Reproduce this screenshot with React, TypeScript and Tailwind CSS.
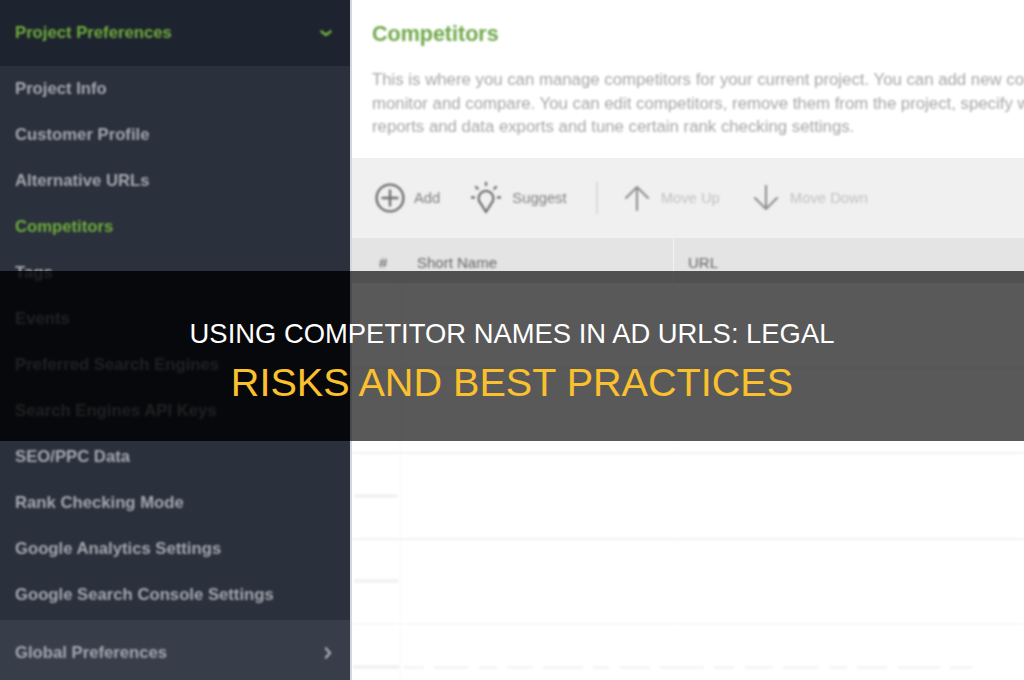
const navItems = [
  'Project Info',
  'Customer Profile',
  'Alternative URLs',
  'Competitors',
  'Tags',
  'Events',
  'Preferred Search Engines',
  'Search Engines API Keys',
  'SEO/PPC Data',
  'Rank Checking Mode',
  'Google Analytics Settings',
  'Google Search Console Settings',
]

// row text in the picture is washed out, only faint smudges are left
const rows = [
  { name: 'w-0', line: 'border-[#f4f4f4]' },
  { name: 'w-0', line: 'border-[#f2f2f2]' },
  { name: 'w-[42px]', line: 'border-[#f2f2f2]' },
  { name: 'w-[44px]', line: 'border-[#f9f9f9]' },
  { name: 'w-[46px]', line: 'border-white' },
]

const dashes = [20, 34, 18, 26, 40, 16, 30, 44, 20, 28, 36, 18, 30, 42, 22]

function ChevronIcon({ dir, color }: { dir: 'down' | 'right'; color: string }) {
  return (
    <svg width="14" height="14" viewBox="0 0 14 14" fill="none" stroke={color} strokeWidth="2.6" strokeLinecap="round" strokeLinejoin="round" className="blur-[0.8px]">
      <path d={dir === 'down' ? 'M2.5 5.5L7 9L11.5 5.5' : 'M5 2.5L9 7L5 11.5'} />
    </svg>
  )
}

function AddIcon() {
  return (
    <svg width="30" height="30" viewBox="0 0 30 30" fill="none" stroke="#6f6f6f" strokeWidth="2.4" strokeLinecap="round">
      <circle cx="15" cy="15" r="13.4" />
      <path d="M15 7.5V22.5M7.5 15H22.5" />
    </svg>
  )
}

function BulbIcon() {
  return (
    <svg width="34" height="34" viewBox="0 0 34 34" fill="none" stroke="#6f6f6f" strokeWidth="2.3" strokeLinecap="round" strokeLinejoin="round">
      <path d="M17 31L12 22.8A7.4 7.4 0 1 1 22 22.8Z" />
      <path d="M17 2V4M7 6L8.6 7.6M27 6L25.4 7.6M3 16.5H5M29 16.5H31" />
    </svg>
  )
}

function ArrowIcon({ dir }: { dir: 'up' | 'down' }) {
  return (
    <svg width="26" height="26" viewBox="0 0 26 26" fill="none" stroke="#8f8f8f" strokeWidth="2.1" strokeLinecap="round" strokeLinejoin="round">
      <path d={dir === 'up' ? 'M13 2V25M2 13L13 2L24 13' : 'M13 1V24M2 13L13 24L24 13'} />
    </svg>
  )
}

function Sidebar() {
  return (
    <aside className="flex h-[680px] w-[350px] shrink-0 flex-col bg-[#2a303c] text-[16.7px] font-bold">
      <div className="flex h-[66px] shrink-0 items-center justify-between bg-[#1e2330] pl-[15px] pr-[17px] text-[#6fae3c]">
        <span className="blur-[0.8px]">Project Preferences</span>
        <ChevronIcon dir="down" color="#6fae3c" />
      </div>
      <ul className="flex-1 blur-[0.8px]">
        {navItems.map((item) => (
          <li
            key={item}
            className={`flex h-[46px] items-center pl-[15px] ${item === 'Competitors' ? 'text-[#6fae3c]' : 'text-[#a4a8b0]'}`}
          >
            {item}
          </li>
        ))}
      </ul>
      <div className="flex h-[60px] shrink-0 items-center justify-between bg-[#383d4a] pl-[15px] pr-[15px] pt-[5px] text-[#a4a8b0]">
        <span className="blur-[0.8px]">Global Preferences</span>
        <ChevronIcon dir="right" color="#a4a8b0" />
      </div>
    </aside>
  )
}

function Toolbar() {
  return (
    <div className="h-[80px] shrink-0 bg-[#f0f0f0] pl-[23px] text-[14.8px]">
      <div className="flex h-full items-center blur-[0.8px]">
        <AddIcon />
        <span className="ml-[9px] text-[#808080]">Add</span>
        <span className="ml-[29px] flex items-center">
          <BulbIcon />
        </span>
        <span className="ml-[9px] text-[#808080]">Suggest</span>
        <span className="ml-[29px] h-[32px] w-[2px] bg-[#dcdcdc]" />
        <span className="ml-[26px]"><ArrowIcon dir="up" /></span>
        <span className="ml-[11px] text-[#c2c2c2]">Move Up</span>
        <span className="ml-[33px]"><ArrowIcon dir="down" /></span>
        <span className="ml-[11px] text-[#c2c2c2]">Move Down</span>
      </div>
    </div>
  )
}

function Main() {
  return (
    <main className="flex h-[680px] min-w-0 flex-1 flex-col overflow-hidden border-l-2 border-[#d3d6dd] bg-white">
      <div className="h-[158px] shrink-0 pl-[20px] pt-[20px] blur-[0.8px]">
        <h1 className="text-[21.5px] leading-[28px] font-bold text-[#6fa84a]">Competitors</h1>
        <p className="mt-[20px] text-[16.8px] leading-[23.5px] text-[#a6a6a6]">
          <span className="block whitespace-nowrap">This is where you can manage competitors for your current project. You can add new competitors to</span>
          <span className="block whitespace-nowrap">monitor and compare. You can edit competitors, remove them from the project, specify which to show in</span>
          <span className="block whitespace-nowrap">reports and data exports and tune certain rank checking settings.</span>
        </p>
      </div>
      <Toolbar />
      <div className="grid h-[45px] shrink-0 grid-cols-[322px_1fr] bg-[#e4e4e4] text-[15px] text-[#666666]">
        <div className="flex items-start border-r border-[#f4f4f4] pl-[27px] pt-[14px]">
          <span className="w-[38px] blur-[0.8px]">#</span>
          <span className="blur-[0.8px]">Short Name</span>
        </div>
        <div className="pl-[14px] pt-[14px]">
          <span className="blur-[0.8px]">URL</span>
        </div>
      </div>
      {rows.map((row, i) => (
        <div key={i} className={`relative grid h-[85.5px] shrink-0 grid-cols-[49px_274px_1fr] border-b-2 blur-[0.8px] ${row.line}`}>
          <div className="flex items-center justify-center border-r border-[#f7f7f7]">
            <div className={`h-[4px] bg-[#f2f2f2] ${row.name}`} />
          </div>
          <div className="border-r border-[#fbfbfb]" />
          <div />
          {i === 4 && (
            <div className="absolute inset-x-[52px] top-[41px] flex justify-between">
              {dashes.map((w, d) => (
                <div key={d} className="h-[3px] bg-[#f5f5f5]" style={{ width: w }} />
              ))}
            </div>
          )}
        </div>
      ))}
    </main>
  )
}

export default function App() {
  return (
    <div className="relative flex h-[680px] w-[1024px] overflow-hidden font-['Liberation_Sans',sans-serif]">
      <Sidebar />
      <Main />
      <div className="absolute inset-x-0 top-[271px] flex h-[170px] flex-col items-center bg-black/65 pt-[47px]">
        <div className="absolute inset-y-0 left-0 w-[350px] bg-black/45" />
        <div className="relative text-[27.4px] leading-[32px] text-white">USING COMPETITOR NAMES IN AD URLS: LEGAL</div>
        <div className="relative mt-[9px] text-[39.6px] leading-[46px] text-[#fbc02d]">RISKS AND BEST PRACTICES</div>
      </div>
    </div>
  )
}
